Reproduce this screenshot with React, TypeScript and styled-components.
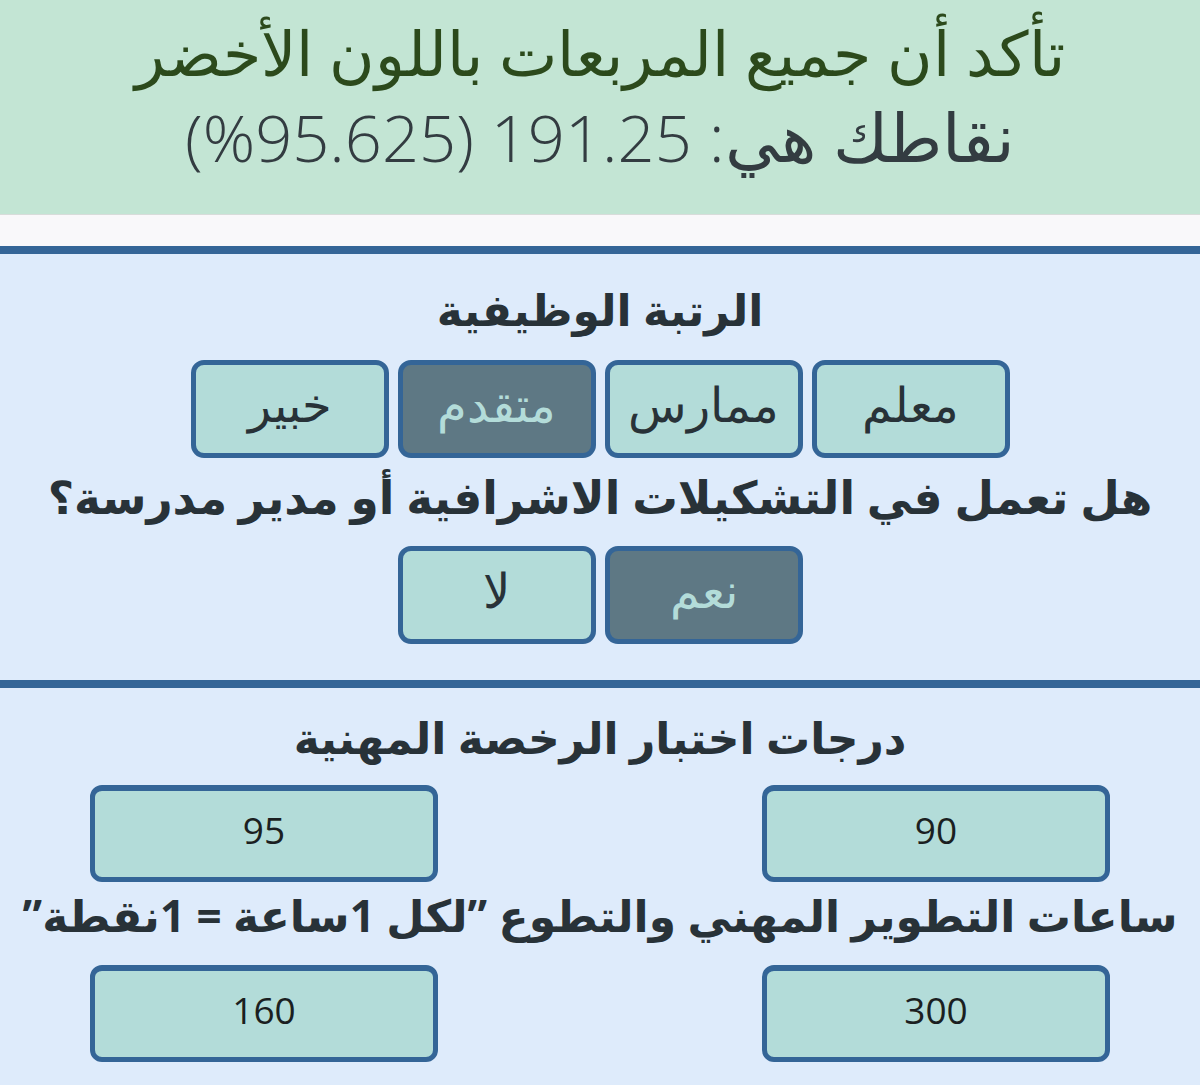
import React from "react";
import styled, { createGlobalStyle } from "styled-components";

const Global = createGlobalStyle`
  html, body { margin: 0; padding: 0; background: #deebfb; }
  body { font-family: "Open Sans", "DejaVu Sans", sans-serif; }
`;

const Page = styled.div`
  direction: rtl;
  width: 1200px;
  min-height: 1085px;
  background: #deebfb;
  display: flex;
  flex-direction: column;
`;

const Header = styled.header`
  background: #c3e5d4;
  height: 215px;
  box-sizing: border-box;
  padding-top: 12px;
  display: flex;
  flex-direction: column;
  align-items: center;
  gap: 4px;
  border-bottom: 1px solid #d8dcda;
`;

const HeaderLine = styled.div<{ $color: string; $size: number }>`
  font-size: ${(p) => p.$size}px;
  font-weight: 300;
  line-height: 80px;
  height: 80px;
  color: ${(p) => p.$color};
  text-align: center;
  white-space: nowrap;
`;

const ArabicPart = styled.span`
  font-size: 67px;
`;

const Strip = styled.div`
  height: 31px;
  background: #f9f8fa;
`;

const Section = styled.section<{ $top: number; $bottom: number }>`
  border-top: 8px solid #346597;
  padding: ${(p) => p.$top}px 0 ${(p) => p.$bottom}px;
  display: flex;
  flex-direction: column;
  align-items: center;
`;

const Title = styled.h2<{ $mt?: number; $mb: number; $size?: number }>`
  margin: ${(p) => p.$mt ?? 0}px 0 ${(p) => p.$mb}px;
  font-size: ${(p) => p.$size ?? 44}px;
  line-height: 50px;
  height: 50px;
  font-weight: 700;
  color: #283238;
  text-align: center;
  white-space: nowrap;
`;

const ChoiceRow = styled.div`
  display: flex;
  gap: 9px;
  justify-content: center;
`;

const Choice = styled.button<{ $active?: boolean }>`
  width: 198px;
  height: 98px;
  box-sizing: border-box;
  border: 5px solid #346597;
  border-radius: 13px;
  background: ${(p) => (p.$active ? "#5e7884" : "#b3dcd9")};
  color: ${(p) => (p.$active ? "#b3dcd9" : "#283238")};
  font-family: "Open Sans", "DejaVu Sans", sans-serif;
  font-size: 48px;
  font-weight: 300;
  line-height: 1;
  padding: 0 0 10px;
  display: flex;
  align-items: center;
  justify-content: center;
  direction: rtl;
`;

const InputRow = styled.div`
  align-self: stretch;
  display: flex;
  justify-content: space-between;
  padding: 0 90px;
`;

const NumBox = styled.div`
  width: 348px;
  height: 97px;
  box-sizing: border-box;
  border: 5px solid #346597;
  border-top-width: 6px;
  border-radius: 12px;
  background: #b3dcd9;
  color: #1b1f21;
  font-family: "Open Sans", "DejaVu Sans", sans-serif;
  font-size: 37px;
  display: flex;
  align-items: center;
  justify-content: center;
  padding-bottom: 10px;
`;

export default function App() {
  return (
    <Page>
      <Global />
      <Header>
        <HeaderLine $color="#2c4a1c" $size={62}>
          تأكد أن جميع المربعات باللون الأخضر
        </HeaderLine>
        <HeaderLine $color="#333c41" $size={65}>
          <ArabicPart>نقاطك هي:</ArabicPart> 191.25 (95.625%)
        </HeaderLine>
      </Header>
      <Strip />
      <Section $top={30} $bottom={36}>
        <Title $mb={26}>الرتبة الوظيفية</Title>
        <ChoiceRow>
          <Choice>معلم</Choice>
          <Choice>ممارس</Choice>
          <Choice $active>متقدم</Choice>
          <Choice>خبير</Choice>
        </ChoiceRow>
        <Title $mt={13} $mb={25} $size={45.5}>
          هل تعمل في التشكيلات الاشرافية أو مدير مدرسة؟
        </Title>
        <ChoiceRow>
          <Choice $active>نعم</Choice>
          <Choice>لا</Choice>
        </ChoiceRow>
      </Section>
      <Section $top={24} $bottom={23}>
        <Title $mb={23}>درجات اختبار الرخصة المهنية</Title>
        <InputRow>
          <NumBox>90</NumBox>
          <NumBox>95</NumBox>
        </InputRow>
        <Title $mt={8} $mb={25}>
          ساعات التطوير المهني والتطوع ”لكل 1ساعة = 1نقطة”
        </Title>
        <InputRow>
          <NumBox>300</NumBox>
          <NumBox>160</NumBox>
        </InputRow>
      </Section>
    </Page>
  );
}
